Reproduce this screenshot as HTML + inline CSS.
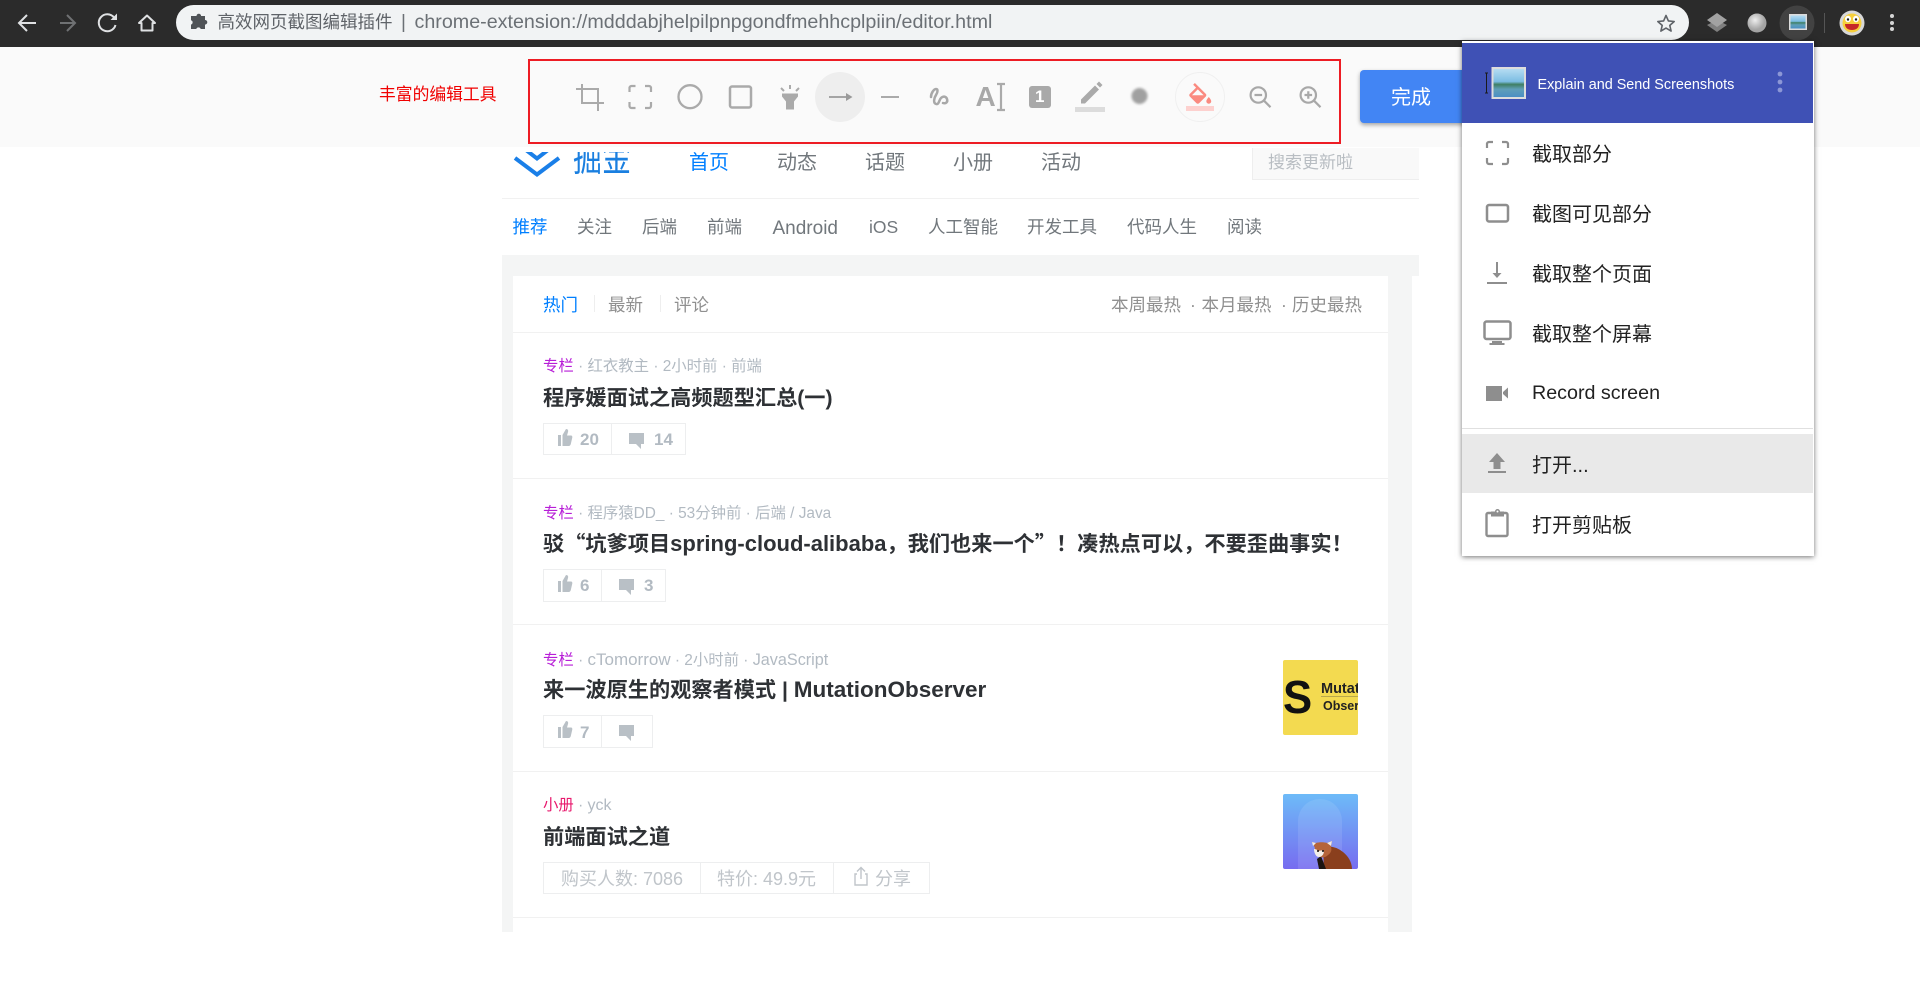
<!DOCTYPE html>
<html><head><meta charset="utf-8"><title>编辑</title>
<style>
html,body{margin:0;padding:0;width:1920px;height:993px;overflow:hidden;background:#fff;font-family:"Liberation Sans","Noto Sans CJK SC",sans-serif}
.a{position:absolute}
.t{position:absolute;white-space:nowrap;line-height:1}
svg.o{position:absolute;left:0;top:0;width:1920px;height:993px;overflow:visible}
.g{color:#71777c;font-size:17.5px}
.m{font-size:15.4px;color:#b2bac2}
.m b{font-weight:400;color:#b71ed7}
.h{font-size:21.2px;font-weight:700;color:#2e3135}
.h i{font-style:normal;font-size:22.4px}
.h u{text-decoration:none;font-family:"Noto Sans CJK SC",sans-serif}
.n{font-size:20px;color:#71777c}
.l{position:absolute;left:513px;width:875px;height:1px;background:#f1f1f1}
.btn{position:absolute;border:1px solid #edeeef;box-sizing:border-box}
.s{color:#b2bac2;font-size:17px;font-weight:700}
.mi{font-size:20px;color:#212121;left:1532px}
#page{position:absolute;left:0;top:0;width:1920px;height:993px;filter:blur(.35px)}
</style></head><body>

<div id="page">
<!-- page background -->
<div class="a" style="left:502px;top:255px;width:910px;height:677px;background:#f4f5f5"></div>
<div class="a" style="left:1412px;top:255px;width:7px;height:21px;background:#f4f5f5"></div>
<div class="a" style="left:513px;top:276px;width:875px;height:656px;background:#fff"></div>
<div class="a" style="left:502px;top:198px;width:917px;height:1px;background:#f1f1f1"></div>

<!-- logo (clipped at top) -->
<div class="a" style="left:505px;top:152px;width:140px;height:32px;overflow:hidden">
  <svg class="a" style="left:0;top:0;width:140px;height:32px" viewBox="505 152 140 32"><path d="M515 158l22 16.500 22-16.500M526 150l11 8.500 11-8.500" fill="none" stroke="#1a7fe8" stroke-width="4"/></svg>
  <div class="t" style="left:68px;top:-12px;font-size:29px;color:#1a7fe0;transform:scaleY(1.35);transform-origin:0 0">掘金</div>
</div>
<div class="t n" style="left:689px;top:153px;color:#007fff">首页</div>
<div class="t n" style="left:777px;top:153px">动态</div>
<div class="t n" style="left:865px;top:153px">话题</div>
<div class="t n" style="left:953px;top:153px">小册</div>
<div class="t n" style="left:1041px;top:153px">活动</div>
<div class="a" style="left:1252px;top:148px;width:167px;height:32px;background:#f9f9f9;border-left:1px solid #eee;border-bottom:1px solid #eee;box-sizing:border-box"></div>
<div class="t" style="left:1268px;top:154px;font-size:17px;color:#b8bdc2">搜索更新啦</div>

<div class="t g" style="left:512.500px;top:219px;color:#007fff">推荐</div>
<div class="t g" style="left:577px;top:219px">关注</div>
<div class="t g" style="left:642px;top:219px">后端</div>
<div class="t g" style="left:707px;top:219px">前端</div>
<div class="t g" style="left:772.500px;top:219px;font-size:19px">Android</div>
<div class="t g" style="left:869px;top:219px">iOS</div>
<div class="t g" style="left:928px;top:219px">人工智能</div>
<div class="t g" style="left:1027px;top:219px">开发工具</div>
<div class="t g" style="left:1127px;top:219px">代码人生</div>
<div class="t g" style="left:1227px;top:219px">阅读</div>

<!-- tabs -->
<div class="t g" style="left:543px;top:297px;color:#007fff">热门</div>
<div class="a" style="left:594px;top:295px;width:1px;height:17px;background:#eee"></div>
<div class="t g" style="left:608px;top:297px;color:#909090">最新</div>
<div class="a" style="left:660px;top:295px;width:1px;height:17px;background:#eee"></div>
<div class="t g" style="left:674px;top:297px;color:#909090">评论</div>
<div class="t g" style="left:1111px;top:297px;color:#909090">本周最热</div>
<div class="t g" style="left:1190px;top:297px;color:#909090">·</div>
<div class="t g" style="left:1201.500px;top:297px;color:#909090">本月最热</div>
<div class="t g" style="left:1281px;top:297px;color:#909090">·</div>
<div class="t g" style="left:1292px;top:297px;color:#909090">历史最热</div>
<div class="l" style="top:332px"></div>

<!-- item 1 -->
<div class="t m" style="left:543px;top:359px"><b>专栏</b> · 红衣教主 · 2小时前 · 前端</div>
<div class="t h" style="left:543px;top:388px">程序媛面试之高频题型汇总(一)</div>
<div class="btn" style="left:543px;top:423px;width:69px;height:32px"></div>
<div class="btn" style="left:611px;top:423px;width:75px;height:32px"></div>
<div class="t s" style="left:580px;top:431px">20</div>
<div class="t s" style="left:654px;top:431px">14</div>
<div class="l" style="top:478px"></div>

<!-- item 2 -->
<div class="t m" style="left:543px;top:506px"><b>专栏</b> · 程序猿DD_ · 53分钟前 · 后端 / Java</div>
<div class="t h" style="left:543px;top:532px">驳<u>“</u>坑爹项目<i style="font-size:22px">spring-cloud-alibaba</i>，我们也来一个<u>”</u>！凑热点可以，不要歪曲事实！</div>
<div class="btn" style="left:543px;top:569px;width:59px;height:33px"></div>
<div class="btn" style="left:601px;top:569px;width:65px;height:33px"></div>
<div class="t s" style="left:580px;top:577px">6</div>
<div class="t s" style="left:644px;top:577px">3</div>
<div class="l" style="top:624px"></div>

<!-- item 3 -->
<div class="t m" style="left:543px;top:651px"><b>专栏</b> · <span style="font-size:17px">cTomorrow</span> · 2小时前 · <span style="font-size:16.200px">JavaScript</span></div>
<div class="t h" style="left:543px;top:679px">来一波原生的观察者模式 | <i style="font-size:22.500px">MutationObserver</i></div>
<div class="btn" style="left:543px;top:715px;width:59px;height:33px"></div>
<div class="btn" style="left:601px;top:715px;width:52px;height:33px"></div>
<div class="t s" style="left:580px;top:724px">7</div>
<div class="a" style="left:1283px;top:660px;width:75px;height:75px;background:#f3da50;border-radius:2px;overflow:hidden">
  <div class="t" style="left:0;top:9px;font-size:46px;font-weight:700;color:#111;line-height:56px;transform:scaleX(.95);transform-origin:0 0">S</div>
  <div class="t" style="left:38px;top:22px;font-size:14.500px;font-weight:700;color:#222">Mutation</div>
  <div class="a" style="left:38px;top:36px;width:40px;height:1px;background:#b9a84a"></div>
  <div class="t" style="left:40px;top:40px;font-size:12.500px;font-weight:700;color:#222">Observer</div>
</div>
<div class="l" style="top:771px"></div>

<!-- item 4 -->
<div class="t m" style="left:543px;top:798px"><b style="color:#e8196d">小册</b> · <span style="font-size:16px">yck</span></div>
<div class="t h" style="left:543px;top:827px">前端面试之道</div>
<div class="btn" style="left:543px;top:862px;width:158px;height:32px"></div>
<div class="btn" style="left:700px;top:862px;width:134px;height:32px"></div>
<div class="btn" style="left:833px;top:862px;width:97px;height:32px"></div>
<div class="t" style="left:561px;top:870px;font-size:18px;color:#c0c5ca">购买人数: 7086</div>
<div class="t" style="left:717px;top:870px;font-size:18px;color:#c0c5ca">特价: 49.9元</div>
<div class="t" style="left:875px;top:870px;font-size:18px;color:#c0c5ca">分享</div>
<div class="a" style="left:1283px;top:794px;width:75px;height:75px;border-radius:2px;overflow:hidden;background:linear-gradient(#6dbbf8,#776cf0)">
  <div class="a" style="left:15px;top:5px;width:44px;height:72px;border-radius:22px 22px 0 0;background:rgba(255,255,255,.1)"></div>
  <svg class="a" style="left:0;top:0" width="75" height="75"><path d="M40 54c6-3 14-1 20 4 5 4 9 10 9 17H41z" fill="#8a3f1d"/><path d="M38 62l5 13h-7l-2-10z" fill="#1d1512"/><path d="M29 48l4 1c3-1 8-1 11 0l5-2-1 6c1 3 0 6-3 8-3 3-7 3-10 1-3-2-4-5-3-8z" fill="#b5643a"/><path d="M31 55c2 0 4 1 4 3 1-2 4-2 6-1 0 3-2 6-5 6s-5-4-5-8z" fill="#f3eee8"/><circle cx="35" cy="57" r="1" fill="#111"/><circle cx="40" cy="57" r="1" fill="#111"/><path d="M29 48l4 1-3 3zM49 47l-5 2 4 3z" fill="#f0ece6"/></svg>
</div>
<div class="l" style="top:917px"></div>

<svg class="o" viewBox="0 0 1920 993">
  <g id="thumbs" fill="#b9c0c6">
    <path id="tu" d="M558 446v-11h3v11zM562.500 446v-11l3.500-6c2 0 2.500 1.500 2 3l-1 3.500h4c1 0 1.500 1 1.300 2l-1.500 6.500c-.2 1-1 2-2 2z"/>
    <use href="#tu" y="146"/><use href="#tu" y="292"/>
    <path id="cm" d="M629 433h15v11h-3v5l-5-5h-7z"/>
    <use href="#cm" x="-10" y="146"/><use href="#cm" x="-10" y="292"/>
  </g>
  <path d="M857 871.500l4-4 4 4M861 868v11M857 874h-2v11h12v-11h-2" fill="none" stroke="#c0c5ca" stroke-width="1.400"/>
</svg>
</div>

<!-- browser chrome -->
<div class="a" style="left:0;top:0;width:1920px;height:47px;background:#2b2b2b"></div>
<div class="a" style="left:176px;top:5px;width:1513px;height:35px;border-radius:18px;background:#f1f3f4"></div>
<svg class="o" viewBox="0 0 1920 993">
  <g fill="none" stroke="#dfe1e3" stroke-width="2">
    <path d="M36 23H20M27 15l-8 8 8 8"/>
    <path d="M60 23h15M67 15l8 8-8 8" stroke="#6f7173"/>
    <path d="M114 17.500A8.500 8.500 0 1 0 115.500 25" />
    <path d="M155 23l-8-7.500-8 7.500h2.500v7.500h11V23z" stroke-linejoin="round"/>
  </g>
  <path d="M110.500 20h6.500v-6.500z" fill="#dfe1e3"/>
  <!-- puzzle -->
  <path d="M193 16h3.500a2.300 2.300 0 0 1 4.600 0h3.900v4a2.300 2.300 0 0 1 0 4.600V29h-4.300a2.300 2.300 0 0 0-4.400 0H191v-4.400a2.300 2.300 0 0 0 0-4.400V16z" fill="#4f5357" transform="translate(0 0)"/>
  <!-- star -->
  <path d="M1666 15.500l2.400 5.400 5.800.6-4.400 3.900 1.300 5.700-5.100-3-5.100 3 1.300-5.700-4.400-3.900 5.800-.6z" fill="none" stroke="#5f6368" stroke-width="1.600" stroke-linejoin="round"/>
  <!-- extension icons -->
  <path d="M1707 25l10 7 10-7-10-5z" fill="#7f7f7f"/><path d="M1717 13l10 7-10 7-10-7z" fill="#a2a2a2"/>
  <defs><radialGradient id="ball" cx=".4" cy=".35"><stop offset="0" stop-color="#eee"/><stop offset="1" stop-color="#a4a4a4"/></radialGradient></defs>
  <circle cx="1757" cy="23" r="9.500" fill="url(#ball)"/>
  <circle cx="1797" cy="23" r="17.500" fill="#424242"/>
  <rect x="1824" y="13" width="1" height="20" fill="#555"/>
  <circle cx="1852" cy="23" r="12.500" fill="#d8d8d8"/>
  <circle cx="1852" cy="23" r="9.500" fill="#f6cf3c"/>
  <ellipse cx="1848" cy="19" rx="3" ry="3.200" fill="#fff"/><ellipse cx="1856" cy="19" rx="3" ry="3.200" fill="#fff"/>
  <circle cx="1848" cy="19.500" r="1.200" fill="#222"/><circle cx="1856" cy="19.500" r="1.200" fill="#222"/>
  <path d="M1845 24h14c0 4-3 6-7 6s-7-2-7-6z" fill="#c62828"/>
  <g fill="#d5d5d5"><circle cx="1892" cy="16" r="2"/><circle cx="1892" cy="23" r="2"/><circle cx="1892" cy="29" r="2"/></g>
  <defs><linearGradient id="pic" x1="0" y1="0" x2="0" y2="1"><stop offset="0" stop-color="#b5dcf2"/><stop offset=".45" stop-color="#7cbde3"/><stop offset=".55" stop-color="#3f7f63"/><stop offset=".72" stop-color="#5f9fb8"/><stop offset="1" stop-color="#4b8fc4"/></linearGradient></defs>
  <rect x="1789" y="14" width="18" height="16" fill="#ddd"/>
  <rect x="1790.500" y="15.500" width="15" height="13" fill="url(#pic)"/>
</svg>
<div class="t" style="left:217.500px;top:14px;font-size:17.500px;color:#5f6368">高效网页截图编辑插件</div>
<div class="t" style="left:401px;top:13px;font-size:19px;color:#6b7075;font-family:'Liberation Sans',sans-serif">|</div>
<div class="t" style="left:414.500px;top:13px;font-size:19.700px;color:#6b7075">chrome-extension://mdddabjhelpilpnpgondfmehhcplpiin/editor.html</div>

<!-- toolbar -->
<div class="a" style="left:0;top:47px;width:1920px;height:100px;background:#fafafa"></div>
<div class="a" style="left:528px;top:59px;width:813px;height:85px;box-sizing:border-box;border:2px solid #ed1c24"></div>
<div class="t" style="left:379px;top:87px;font-size:16.800px;color:#f00000">丰富的编辑工具</div>
<div class="a" style="left:1360px;top:70px;width:110px;height:53px;background:#4285f4;border-radius:4px;box-shadow:0 2px 4px rgba(0,0,0,.35)"></div>
<div class="t" style="left:1391px;top:88px;font-size:20px;color:#fff">完成</div>

<svg class="o" viewBox="0 0 1920 993">
  <g fill="none" stroke="#aaaaaa" stroke-width="2">
    <path d="M576 89h22v22M582 84v19h22"/>
    <path d="M629.500 92v-4a2 2 0 0 1 2-2h4M651 92v-4a2 2 0 0 0-2-2h-4M629.500 102v4a2 2 0 0 0 2 2h4M651 102v4a2 2 0 0 1-2 2h-4" stroke-width="2.200"/>
    <circle cx="690" cy="96.700" r="11.500" stroke-width="2.300"/>
    <rect x="730" y="86.500" width="21" height="21" rx="2" stroke-width="2.500"/>
    <path d="M790 85v4M781 88l3 3M799 88l-3 3" stroke-width="2"/>
  </g>
  <path d="M782 93.500h16v3l-4 5v8h-8v-8l-4-5z" fill="#aaa"/>
  <circle cx="840" cy="97" r="25" fill="#eeeeee"/>
  <path d="M829 97h19" stroke="#9a9a9a" stroke-width="1.800" fill="none"/>
  <path d="M846 93l6.500 4-6.500 4z" fill="#9a9a9a"/>
  <path d="M881 97h18" stroke="#aaa" stroke-width="2"/>
  <path d="M931 97c0-4 3-8 5-8s2 3 0 6-3 8 0 9 3-4 5-6 5-2 6 1-1 5-4 4" fill="none" stroke="#a8a8a8" stroke-width="2.500" stroke-linecap="round"/>
  <path d="M997 84h8M1001 84v26M997 110h8" fill="none" stroke="#aaa" stroke-width="2.200"/>
  <rect x="1029" y="86" width="22" height="22" rx="3" fill="#a9a9a9"/>
  <path d="M1081 99.500l14-14 4 4-14 14h-4zM1096.500 84l2.500-2.500 3.500 3.500-2.500 2.500z" fill="#aaa"/>
  <rect x="1075" y="107" width="30" height="5" fill="#dcdcdc"/>
  <defs><filter id="bl"><feGaussianBlur stdDeviation="1.300"/></filter></defs>
  <circle cx="1139.500" cy="96" r="8" fill="#a0a0a0" filter="url(#bl)"/>
  <circle cx="1200" cy="97" r="24.500" fill="#fafafa" stroke="#f0f0f0"/>
  <g transform="translate(1185.600 83) scale(1.220)"><path fill="#fa8a80" d="M16.560 8.940L7.620 0 6.210 1.410l2.380 2.380-5.150 5.150c-.59.59-.59 1.540 0 2.120l5.500 5.500c.29.29.68.44 1.060.44s.77-.15 1.060-.44l5.500-5.500c.59-.58.59-1.530 0-2.120zM5.210 10L10 5.210 14.790 10H5.210zM19 11.500s-2 2.170-2 3.500c0 1.100.9 2 2 2s2-.9 2-2c0-1.330-2-3.500-2-3.500z"/></g>
  <rect x="1186" y="106" width="28" height="5" fill="#fdd1cf"/>
  <g fill="none" stroke="#a8a8a8" stroke-width="2.200">
    <circle cx="1258.300" cy="95" r="7.700"/><path d="M1264 100.700l6.500 6.500M1254.500 95h7.600"/>
    <circle cx="1308.300" cy="95" r="7.700"/><path d="M1314 100.700l6.500 6.500M1304.500 95h7.600M1308.300 91.200v7.600"/>
  </g>
</svg>
<div class="t" style="left:975.500px;top:85px;font-size:28px;font-weight:700;color:#a8a8a8;line-height:24px">A</div>
<div class="t" style="left:1035px;top:88px;font-size:17px;font-weight:700;color:#fff;line-height:18px">1</div>

<!-- popup -->
<div class="a" style="left:1462px;top:41px;width:352px;height:515px;background:#fff;box-shadow:0 1px 5px rgba(0,0,0,.55)"></div>
<div class="a" style="left:1462px;top:43px;width:351px;height:80px;background:#3f51b5"></div>
<div class="a" style="left:1462px;top:434px;width:351px;height:59px;background:#e9e9e9"></div>
<div class="a" style="left:1462px;top:428px;width:351px;height:1px;background:#e0e0e0"></div>
<div class="t" style="left:1537.500px;top:77px;font-size:14.400px;color:#fff;line-height:16px">Explain and Send Screenshots</div>
<div class="t mi" style="top:145px">截取部分</div>
<div class="t mi" style="top:205px">截图可见部分</div>
<div class="t mi" style="top:265px">截取整个页面</div>
<div class="t mi" style="top:325px">截取整个屏幕</div>
<div class="t mi" style="top:384px;font-size:19.700px">Record screen</div>
<div class="t mi" style="top:456px">打开...</div>
<div class="t mi" style="top:516px">打开剪贴板</div>
<svg class="o" viewBox="0 0 1920 993">
  <rect x="1491.500" y="67" width="34.500" height="32" fill="#ddd"/>
  <rect x="1493.500" y="69" width="30.500" height="28" fill="url(#pic)"/>
  <path d="M1485 73h3M1486.500 73v20M1485 93h3" stroke="#1a1a1a" stroke-width="1" fill="none"/>
  <g fill="#8c97d6"><circle cx="1780" cy="74" r="2.400"/><circle cx="1780" cy="82" r="2.400"/><circle cx="1780" cy="90" r="2.400"/></g>
  <g fill="none" stroke="#8e8e8e" stroke-width="2.200">
    <path d="M1487 148v-4a2 2 0 0 1 2-2h4M1508 148v-4a2 2 0 0 0-2-2h-4M1487 158v4a2 2 0 0 0 2 2h4M1508 158v4a2 2 0 0 1-2 2h-4"/>
    <rect x="1487" y="205" width="21" height="16.500" rx="2" stroke-width="2.500"/>
    <path d="M1487 283h20M1497 262v14" stroke-width="2"/>
    <rect x="1484.500" y="321.500" width="26" height="17.500" rx="2" stroke-width="2.500"/>
    <path d="M1491 513h-3a1.500 1.500 0 0 0-1.500 1.500v20a1.500 1.500 0 0 0 1.500 1.500h18a1.500 1.500 0 0 0 1.500-1.500v-20a1.500 1.500 0 0 0-1.500-1.500h-3" stroke-width="2.400"/>
  </g>
  <g fill="#8e8e8e">
    <path d="M1492.500 273h9l-4.500 5z"/>
    <path d="M1492 341h10v2h2.500v2h-15v-2h2.500z"/>
    <path d="M1486 386h16v15h-16zM1503 392l5-4.500v11l-5-4.500z" />
    <path d="M1497 453l8 9h-4.500v7h-7v-7H1489z"/>
    <rect x="1488" y="471" width="18" height="2"/>
    <path d="M1491 511.500h4a2.300 2.300 0 0 1 5 0h4v5h-13z"/>
  </g>
  <circle cx="1497.500" cy="511.500" r="1" fill="#fff"/>
</svg>
</body></html>
